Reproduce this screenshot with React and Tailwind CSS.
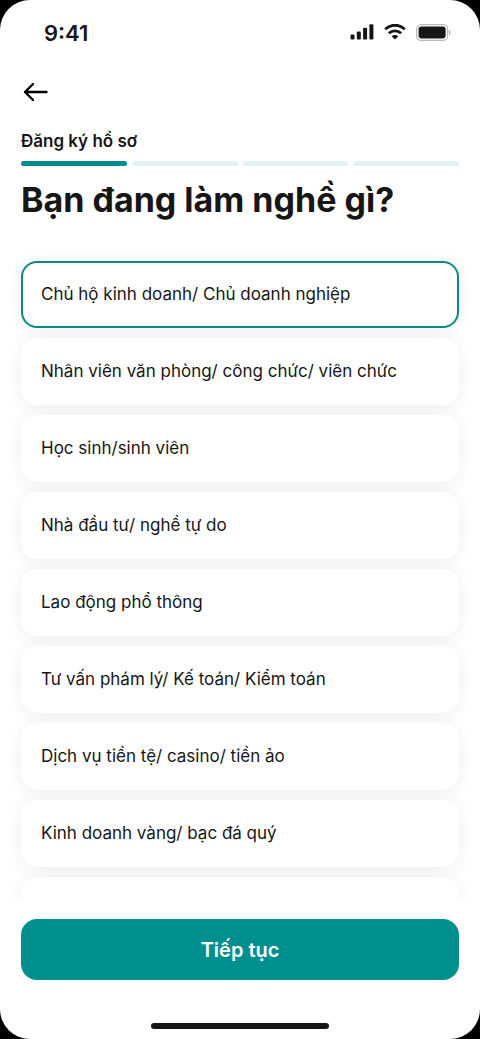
import { useState } from 'react'

const STEPS = 4
const CURRENT_STEP = 1

const JOBS = [
  'Chủ hộ kinh doanh/ Chủ doanh nghiệp',
  'Nhân viên văn phòng/ công chức/ viên chức',
  'Học sinh/sinh viên',
  'Nhà đầu tư/ nghề tự do',
  'Lao động phổ thông',
  'Tư vấn phám lý/ Kế toán/ Kiểm toán',
  'Dịch vụ tiền tệ/ casino/ tiền ảo',
  'Kinh doanh vàng/ bạc đá quý',
  'Khác',
]

function StatusBar() {
  return (
    <div className="flex h-16 shrink-0 items-center justify-between pr-[29px] pl-11">
      <span className="pt-[2px] text-[22px] leading-6 font-semibold">9:41</span>
      <div className="flex items-center gap-[10px]" aria-hidden="true">
        <svg width="24" height="16" viewBox="0 0 24 16" fill="#161616">
          <rect x="0.5" y="10.5" width="4" height="5" rx="1" />
          <rect x="6.8" y="7.5" width="4" height="8" rx="1" />
          <rect x="13.1" y="3.8" width="4" height="11.7" rx="1" />
          <rect x="19.4" y="0.2" width="4" height="15.3" rx="1" />
        </svg>
        <svg width="22" height="16" viewBox="0 0 22 16" fill="none" stroke="#161616" strokeWidth="2.9">
          <path d="M1.2 5.3C6.6 -0.1 15.4 -0.1 20.8 5.3" />
          <path d="M4.9 9.3C8.3 6 13.7 6 17.1 9.3" />
          <path d="M11 15.6l-3.4-3.3c1.9-1.7 4.9-1.7 6.8 0z" fill="#161616" stroke="none" />
        </svg>
        <svg width="35" height="17" viewBox="0 0 35 17">
          <rect x="0.6" y="0.6" width="31" height="15.8" rx="4.6" fill="#fff" stroke="#b8b8b8" strokeWidth="1.2" />
          <rect x="2.6" y="2.6" width="27" height="11.8" rx="2.8" fill="#161616" />
          <path d="M33.2 5.7c1.7.9 1.7 4.7 0 5.6z" fill="#a8a8a8" />
        </svg>
      </div>
    </div>
  )
}

function StepBar() {
  return (
    <div className="mt-2 flex gap-[5px]">
      {Array.from({ length: STEPS }, (_, i) => (
        <span
          key={i}
          className={
            i < CURRENT_STEP
              ? 'h-[5px] flex-1 rounded-full bg-[#008f8f]'
              : 'h-[5px] flex-1 rounded-full bg-[#e3f3f3]'
          }
        />
      ))}
    </div>
  )
}

function JobOption({ job, checked, onSelect }) {
  return (
    <label className="flex h-[67px] shrink-0 cursor-pointer items-center rounded-2xl border-2 border-white bg-white px-[18px] text-[17px] shadow-[0_2px_18px_rgba(0,0,0,0.07)] has-checked:border-[#0a8a85]">
      <input
        type="radio"
        name="job"
        value={job}
        checked={checked}
        onChange={() => onSelect(job)}
        className="sr-only"
      />
      {job}
    </label>
  )
}

export default function App() {
  const [selected, setSelected] = useState(JOBS[0])

  return (
    <div className="bg-black">
      <main className="flex h-screen flex-col overflow-hidden rounded-[30px] bg-white font-['Inter',sans-serif] text-[#161616]">
        <StatusBar />

        <header className="shrink-0 px-[21px]">
          <button type="button" aria-label="Quay lại" className="mt-4 block">
            <svg
              width="28"
              height="24"
              viewBox="0 0 28 24"
              fill="none"
              stroke="#000"
              strokeWidth="2.4"
              strokeLinecap="round"
              strokeLinejoin="round"
            >
              <path d="M25.5 12H4M12 4L4 12l8 8" />
            </svg>
          </button>
          <p className="mt-[25px] text-[17px] leading-6 font-semibold">Đăng ký hồ sơ</p>
          <StepBar />
          <h1 id="job-heading" className="mt-3 text-[34px] leading-[44px] font-bold">
            Bạn đang làm nghề gì?
          </h1>
        </header>

        <div
          role="radiogroup"
          aria-labelledby="job-heading"
          className="mt-[15px] flex min-h-0 flex-1 flex-col gap-[10px] overflow-y-auto px-[21px] pt-6 pb-5 [scrollbar-width:none]"
        >
          {JOBS.map((job) => (
            <JobOption key={job} job={job} checked={job === selected} onSelect={setSelected} />
          ))}
        </div>

        <footer className="flex shrink-0 flex-col items-center px-[21px] pt-[21px] pb-[10px]">
          <button
            type="button"
            className="h-[61px] w-full rounded-2xl bg-[#008f8f] text-xl font-semibold text-white"
          >
            Tiếp tục
          </button>
          <span className="mt-[43px] h-[6px] w-[178px] rounded-full bg-[#161616]" />
        </footer>
      </main>
    </div>
  )
}
